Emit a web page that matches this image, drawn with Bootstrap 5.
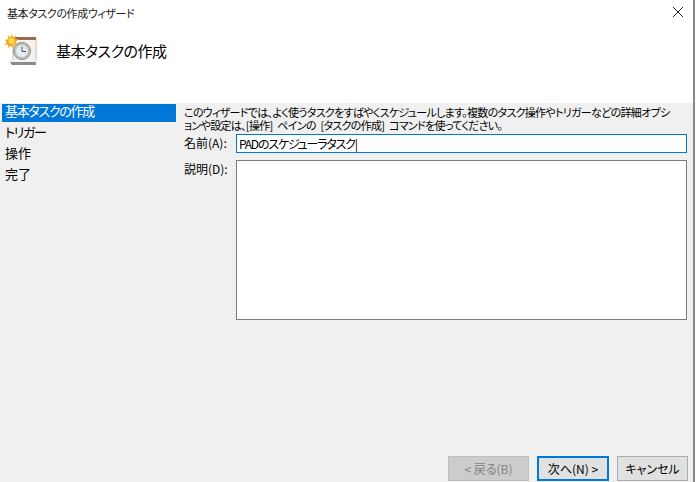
<!DOCTYPE html>
<html lang="ja">
<head>
<meta charset="utf-8">
<link href="https://cdn.jsdelivr.net/npm/bootstrap@5.3.0/dist/css/bootstrap.min.css" rel="stylesheet">
<style>
html,body{margin:0;height:482px;overflow:hidden;background:#fff}
body{font-family:"Noto Sans CJK JP","Liberation Sans",sans-serif;color:#000;font-size:12px;font-feature-settings:"palt"}
.wiz-shell{width:695px;height:482px;border-right:2px solid #888;background:#fff}
.wiz-title{height:28px;padding:5px 0 0 7px;font-size:11px;letter-spacing:-.4px;line-height:16px;color:#222}
.wiz-close{padding:0;width:14px;height:14px;margin:0 7px 0 0;border:0;background:none}
.wiz-head{height:75px;padding-left:4px}
.wiz-icon{width:33px;height:33px;margin-top:5px;flex:none}
.wiz-h1{font-size:15px;letter-spacing:-.5px;line-height:22px;margin:12px 0 0 19px;font-weight:400;color:#000}
.wiz-body{height:379px;background:#f0f0f0}
.wiz-side{width:176px;flex:none;padding:1px 0 0 2px}
.wiz-step{height:17.5px;line-height:14px;font-size:13px;padding-left:3px;margin-bottom:3.5px;color:#000}
.wiz-step.now{background:#0078d7;color:#fff}
.wiz-step.kana{letter-spacing:-1.3px}
.wiz-main{width:517px;flex:none;padding:0 0 0 8px;position:relative}
.wiz-desc{font-size:11px;line-height:13px;margin:3px 0 0 0;white-space:nowrap;letter-spacing:-.7px;word-spacing:3px}
.wiz-row-a{margin-top:2px}
.wiz-row-b{margin-top:7px}
.wiz-lab{width:52px;flex:none;font-size:12px;line-height:18px}
.wiz-name{width:451px;height:19px;border:1px solid #0078d7;background:#fff;font-size:12px;letter-spacing:-1.2px;line-height:16px;padding:0 2px;color:#000;border-radius:0;outline:0;font-feature-settings:"palt"}
.wiz-area{width:451px;height:160px;border:1px solid #7a7a7a;background:#fff;border-radius:0;padding:0;resize:none;display:block}
.wiz-foot{position:absolute;right:5px;bottom:1px;gap:8px}
.wiz-btn{height:25px;font-size:12px;line-height:21px;padding:0;border-radius:0;border:1px solid #adadad;background:#e1e1e1;color:#000;font-feature-settings:"palt"}
.wiz-btn.b-back{width:81px;background:#ccc;border-color:#bfbfbf;color:#838383;opacity:1}
.wiz-btn.b-next{width:72px;border:2px solid #0078d7;line-height:19px}
.wiz-btn.b-cancel{width:71px}
</style>
</head>
<body>
<div class="wiz-shell d-flex flex-column">
  <div class="wiz-title d-flex justify-content-between align-items-start">
    <span>基本タスクの作成ウィザード</span>
    <button class="wiz-close" aria-label="閉じる"><svg width="12" height="12" viewBox="0 0 12 12" class="d-block"><path d="M1 1 11 11M11 1 1 11" stroke="#222" stroke-width="1" fill="none"/></svg></button>
  </div>
  <div class="wiz-head d-flex align-items-start">
    <svg class="wiz-icon" viewBox="0 0 33 33">
      <rect x="9" y="6" width="23" height="22" fill="#f5f3ef" stroke="#c4c0b8"/>
      <path d="M5 27h27v2H5z" fill="#f2f2f2"/>
      <path d="M6 29h26v3H8z" fill="#8a8a8a"/>
      <rect x="11" y="4" width="21" height="3" fill="#9b6a50"/>
      <circle cx="18" cy="18" r="8.500" fill="#c2bfb9" stroke="#8e8b86"/>
      <circle cx="18" cy="18" r="6" fill="#e6ecf3"/>
      <path d="M18 13.500V18.500H22" stroke="#555" stroke-width="1" fill="none"/>
      <path d="M7.500 1l1.300 3.200L12 2.500l-1 3.300 3.500.7-3 2.300 2 3-3.500-.4-.5 3.500-2.500-2.500-2.500 2.500-.6-3.500-3.300.6 2-3.100L1 7l3.500-.9L3.700 2.500l3 1.700z" fill="#f7a81b"/>
      <circle cx="7.500" cy="8" r="3" fill="#ffd84d"/>
    </svg>
    <div class="wiz-h1">基本タスクの作成</div>
  </div>
  <div class="wiz-body d-flex">
    <div class="wiz-side">
      <div class="wiz-step now kana">基本タスクの作成</div>
      <div class="wiz-step kana">トリガー</div>
      <div class="wiz-step">操作</div>
      <div class="wiz-step">完了</div>
    </div>
    <div class="wiz-main">
      <p class="wiz-desc">このウィザードでは、よく使うタスクをすばやくスケジュールします。複数のタスク操作やトリガーなどの詳細オプシ<br>ョンや設定は、[操作] ペインの [タスクの作成] コマンドを使ってください。</p>
      <div class="wiz-row-a d-flex">
        <label class="wiz-lab">名前(A):</label>
        <input class="wiz-name" value="PADのスケジューラタスク|">
      </div>
      <div class="wiz-row-b d-flex">
        <label class="wiz-lab">説明(D):</label>
        <textarea class="wiz-area"></textarea>
      </div>
      <div class="wiz-foot d-flex">
        <button class="btn wiz-btn b-back" disabled>&lt; 戻る(B)</button>
        <button class="btn wiz-btn b-next">次へ(N) &gt;</button>
        <button class="btn wiz-btn b-cancel">キャンセル</button>
      </div>
    </div>
  </div>
</div>
<script src="https://cdn.jsdelivr.net/npm/bootstrap@5.3.0/dist/js/bootstrap.bundle.min.js"></script>
</body>
</html>
